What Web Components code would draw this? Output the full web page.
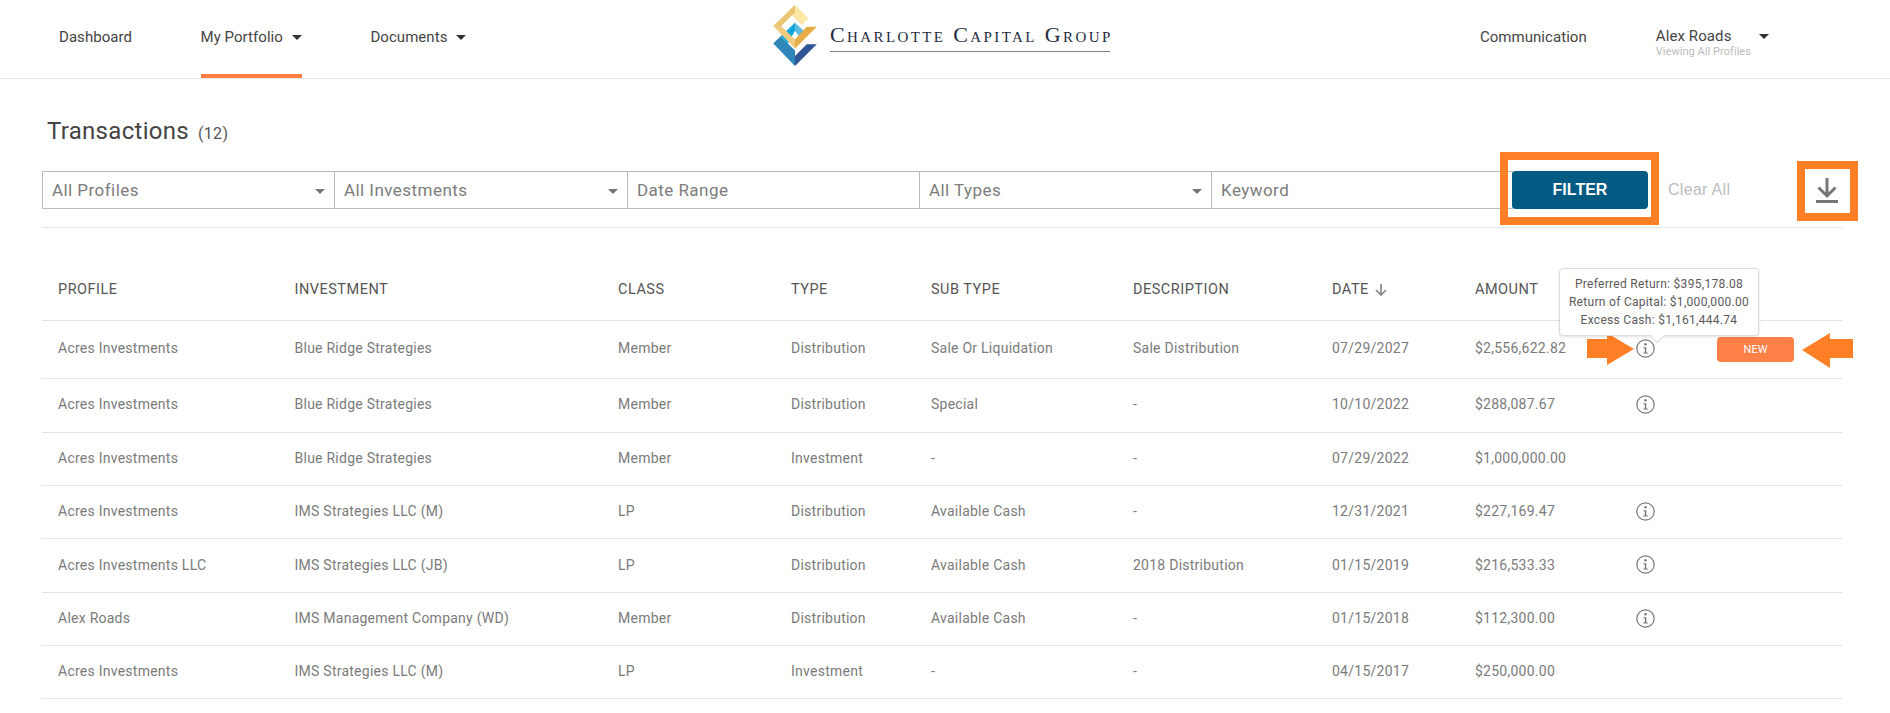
<!DOCTYPE html>
<html lang="en">
<head>
<meta charset="utf-8">
<title>Transactions</title>
<style>
    html, body { margin: 0; background: #fff; }
    body { font-family: Roboto, "Liberation Sans", sans-serif; color: #444; }
</style>
</head>
<body>

<app-header>
    <nav-link slot="left">Dashboard</nav-link>
    <nav-link slot="left" caret active>My Portfolio</nav-link>
    <nav-link slot="left" caret>Documents</nav-link>
    <nav-link slot="right">Communication</nav-link>
    <user-menu slot="right" name="Alex Roads" sub="Viewing All Profiles"></user-menu>
</app-header>

<page-title count="12">Transactions</page-title>

<filter-bar>
    <filter-field select w="293">All Profiles</filter-field>
    <filter-field select w="294">All Investments</filter-field>
    <filter-field w="293">Date Range</filter-field>
    <filter-field select w="293">All Types</filter-field>
    <filter-field w="302">Keyword</filter-field>
</filter-bar>

<tx-table>
    <tx-row head style="--h:93px">
        <span>PROFILE</span><span>INVESTMENT</span><span>CLASS</span><span>TYPE</span><span>SUB TYPE</span><span>DESCRIPTION</span><span>DATE <sort-arrow></sort-arrow></span><span>AMOUNT</span><span></span><span></span>
    </tx-row>
    <tx-row style="--h:58px; --pb:4px">
        <span>Acres Investments</span><span>Blue Ridge Strategies</span><span>Member</span><span>Distribution</span><span>Sale Or Liquidation</span><span>Sale Distribution</span><span>07/29/2027</span><span>$2,556,622.82</span>
        <info-tip open>
            <div>Preferred Return: $395,178.08</div>
            <div>Return of Capital: $1,000,000.00</div>
            <div>Excess Cash: $1,161,444.74</div>
        </info-tip>
        <new-badge>NEW</new-badge>
    </tx-row>
    <tx-row style="--h:54px; --pb:3px">
        <span>Acres Investments</span><span>Blue Ridge Strategies</span><span>Member</span><span>Distribution</span><span>Special</span><span>-</span><span>10/10/2022</span><span>$288,087.67</span><info-tip></info-tip><span></span>
    </tx-row>
    <tx-row style="--h:53px">
        <span>Acres Investments</span><span>Blue Ridge Strategies</span><span>Member</span><span>Investment</span><span>-</span><span>-</span><span>07/29/2022</span><span>$1,000,000.00</span><span></span><span></span>
    </tx-row>
    <tx-row style="--h:53px">
        <span>Acres Investments</span><span>IMS Strategies LLC (M)</span><span>LP</span><span>Distribution</span><span>Available Cash</span><span>-</span><span>12/31/2021</span><span>$227,169.47</span><info-tip></info-tip><span></span>
    </tx-row>
    <tx-row style="--h:54px">
        <span>Acres Investments LLC</span><span>IMS Strategies LLC (JB)</span><span>LP</span><span>Distribution</span><span>Available Cash</span><span>2018 Distribution</span><span>01/15/2019</span><span>$216,533.33</span><info-tip></info-tip><span></span>
    </tx-row>
    <tx-row style="--h:53px">
        <span>Alex Roads</span><span>IMS Management Company (WD)</span><span>Member</span><span>Distribution</span><span>Available Cash</span><span>-</span><span>01/15/2018</span><span>$112,300.00</span><info-tip></info-tip><span></span>
    </tx-row>
    <tx-row style="--h:53px">
        <span>Acres Investments</span><span>IMS Strategies LLC (M)</span><span>LP</span><span>Investment</span><span>-</span><span>-</span><span>04/15/2017</span><span>$250,000.00</span><span></span><span></span>
    </tx-row>
</tx-table>

<script>
class AppHeader extends HTMLElement {
    constructor() {
        super();
        this.attachShadow({ mode: 'open' });
        this.shadowRoot.innerHTML = `
            <style>
                :host {
                    display: flex;
                    align-items: stretch;
                    height: 78px;
                    padding: 0 121px 0 59px;
                    border-bottom: 1px solid #e6e6e6;
                }
                .left { display: flex; align-items: stretch; gap: 68.5px; }
                .right { display: flex; align-items: stretch; gap: 69px; margin-left: auto; }
                brand-logo { margin-left: 306.5px; }
            </style>
            <div class="left"><slot name="left"></slot></div>
            <brand-logo></brand-logo>
            <div class="right"><slot name="right"></slot></div>
        `;
    }
}

class NavLink extends HTMLElement {
    constructor() {
        super();
        this.attachShadow({ mode: 'open' });
        this.shadowRoot.innerHTML = `
            <style>
                :host {
                    display: flex;
                    align-items: center;
                    gap: 9px;
                    font-size: 15px;
                    letter-spacing: .05px;
                    color: #444;
                    padding-bottom: 4px;
                    box-sizing: border-box;
                }
                :host([active]) {
                    padding-bottom: 0;
                    border-bottom: 4px solid #fd7e41;
                }
                i {
                    display: none;
                    border-top: 5px solid #333;
                    border-left: 5px solid transparent;
                    border-right: 5px solid transparent;
                }
                :host([caret]) i { display: block; }
            </style>
            <slot></slot><i></i>
        `;
    }
}

class UserMenu extends HTMLElement {
    constructor() {
        super();
        this.attachShadow({ mode: 'open' });
        this.shadowRoot.innerHTML = `
            <style>
                :host { display: flex; align-items: flex-start; padding-top: 27px; gap: 8px; }
                .name { font-size: 15px; line-height: 18px; letter-spacing: .1px; color: #444; }
                .sub { font-size: 11px; line-height: 13px; letter-spacing: .05px; color: #bbb; }
                i {
                    margin-top: 7px;
                    border-top: 5px solid #333;
                    border-left: 5px solid transparent;
                    border-right: 5px solid transparent;
                }
            </style>
            <div>
                <div class="name">${this.getAttribute('name')}</div>
                <div class="sub">${this.getAttribute('sub')}</div>
            </div>
            <i></i>
        `;
    }
}

class BrandLogo extends HTMLElement {
    constructor() {
        super();
        this.attachShadow({ mode: 'open' });
        this.shadowRoot.innerHTML = `
            <style>
                :host { display: flex; align-items: flex-start; width: 337px; }
                svg { display: block; width: 44px; height: 61px; margin-top: 5px; }
                .word {
                    margin: 20px 0 0 13px;
                    width: 280px;
                    height: 31px;
                    border-bottom: 1px solid #7d8894;
                    font: 22px/30px "Liberation Serif", serif;
                    font-variant: small-caps;
                    letter-spacing: 2.4px;
                    color: #1f2b40;
                    white-space: nowrap;
                }
            </style>
            <svg viewBox="40 15 130 182">
                <path fill="#2e86b9" d="M40 130 62 108 105 151V197Z"/>
                <path fill="#2f5597" d="M105 197 170 132H140L105 167Z"/>
                <path fill="#12a5dd" d="M105 68 62 108 84 130 105 92Z"/>
                <path fill="#5cb9e0" d="M105 68 140 100 118 110 105 92Z"/>
                <path fill="#fbe8a6" d="M105 15 145 55 125 75 85 35Z"/>
                <path fill="#e9c672" d="M105 15 40 78H64L105 37Z"/>
                <path fill="#eecb80" d="M40 78 105 145V118L64 78Z"/>
                <path fill="#e7ae45" d="M105 145 170 80H140L105 118Z"/>
            </svg>
            <div class="word">Charlotte Capital Group</div>
        `;
    }
}

class PageTitle extends HTMLElement {
    constructor() {
        super();
        this.attachShadow({ mode: 'open' });
        this.shadowRoot.innerHTML = `
            <style>
                :host {
                    display: flex;
                    align-items: baseline;
                    gap: 9px;
                    height: 92px;
                    box-sizing: border-box;
                    padding: 36px 0 0 47px;
                    font-size: 24px;
                    line-height: 32px;
                    letter-spacing: .3px;
                    color: #444;
                }
                span { font-size: 16px; color: #555; }
            </style>
            <slot></slot><span>(${this.getAttribute('count')})</span>
        `;
    }
}

class FilterField extends HTMLElement {
    constructor() {
        super();
        this.attachShadow({ mode: 'open' });
        this.shadowRoot.innerHTML = `
            <style>
                :host {
                    display: flex;
                    align-items: center;
                    box-sizing: border-box;
                    height: 38px;
                    margin-right: -1px;
                    padding: 0 9px;
                    border: 1px solid #bbb;
                    font-size: 17px;
                    letter-spacing: .45px;
                    color: #7c7c7c;
                    background: #fff;
                }
                i {
                    display: none;
                    margin-left: auto;
                    margin-top: 2px;
                    border-top: 5px solid #777;
                    border-left: 5px solid transparent;
                    border-right: 5px solid transparent;
                }
                :host([select]) i { display: block; }
            </style>
            <slot></slot><i></i>
        `;
        this.style.width = this.getAttribute('w') + 'px';
    }
}

class FilterBar extends HTMLElement {
    constructor() {
        super();
        this.attachShadow({ mode: 'open' });
        this.shadowRoot.innerHTML = `
            <style>
                :host {
                    display: flex;
                    align-items: flex-start;
                    margin: 0 48px 0 42px;
                    height: 56px;
                    border-bottom: 1px solid #e6e6e6;
                    position: relative;
                }
                .fields { display: flex; }
                .btn-wrap { position: relative; }
                button {
                    display: block;
                    width: 136px;
                    height: 38px;
                    border: 0;
                    border-radius: 4px;
                    background: #005a82;
                    color: #fff;
                    font: 700 16px "Liberation Sans", sans-serif;
                }
                .clear {
                    margin: 9px 0 0 20px;
                    font: 16px/20px "Liberation Sans", sans-serif;
                    letter-spacing: .3px;
                    color: #bdbdbd;
                }
                .dl { position: relative; margin: 7px 0 0 86px; width: 22px; height: 25px; }
                .dl svg { display: block; }
                .mark { position: absolute; border: 8px solid #ff7f27; }
                .mark.a { left: -12px; right: -11px; top: -19px; bottom: -16px; }
                .mark.b { left: -19px; right: -20px; top: -17px; bottom: -18px; }
            </style>
            <div class="fields"><slot></slot></div>
            <div class="btn-wrap">
                <button>FILTER</button>
                <div class="mark a"></div>
            </div>
            <div class="clear">Clear All</div>
            <div class="dl">
                <svg width="22" height="25" viewBox="0 0 22 25">
                    <path d="M11 0V18M2.500 9.500 11 18l8.500-8.500" fill="none" stroke="#777" stroke-width="3"/>
                    <rect y="22" width="22" height="3" fill="#777"/>
                </svg>
                <div class="mark b"></div>
            </div>
        `;
    }
}

class TxTable extends HTMLElement {
    constructor() {
        super();
        this.attachShadow({ mode: 'open' });
        this.shadowRoot.innerHTML = `
            <style>
                :host { display: block; margin: 0 48px 0 42px; }
            </style>
            <slot></slot>
        `;
    }
}

class TxRow extends HTMLElement {
    constructor() {
        super();
        this.attachShadow({ mode: 'open' });
        this.shadowRoot.innerHTML = `
            <style>
                :host {
                    display: grid;
                    grid-template-columns: 236.5px 323.5px 173px 140px 202px 199px 143px 161px 81px 1fr;
                    align-items: center;
                    box-sizing: border-box;
                    height: var(--h);
                    padding: 0 0 var(--pb, 2px) 16px;
                    border-bottom: 1px solid #e3e3e3;
                    font-size: 14px;
                    letter-spacing: .25px;
                    color: #7b7b7b;
                    white-space: nowrap;
                }
                :host([head]) {
                    color: #555;
                    font-size: 14.500px;
                    letter-spacing: .5px;
                    align-items: end;
                    padding-bottom: 22px;
                }
            </style>
            <slot></slot>
        `;
    }
}

class SortArrow extends HTMLElement {
    constructor() {
        super();
        this.attachShadow({ mode: 'open' });
        this.shadowRoot.innerHTML = `
            <style>
                :host { display: inline-block; vertical-align: -2px; margin-left: 2px; }
                svg { display: block; }
            </style>
            <svg width="12" height="12" viewBox="0 0 12 12">
                <path d="M6 0V11M1 6 6 11l5-5" fill="none" stroke="#888" stroke-width="1.700"/>
            </svg>
        `;
    }
}

class InfoTip extends HTMLElement {
    constructor() {
        super();
        this.attachShadow({ mode: 'open' });
        this.shadowRoot.innerHTML = `
            <style>
                :host { display: block; position: relative; width: 19px; height: 19px; }
                :host([open]) { margin-top: 2px; }
                svg { display: block; }
                .tip {
                    display: none;
                    position: absolute;
                    left: -77px;
                    top: -71px;
                    width: 200px;
                    box-sizing: border-box;
                    padding: 6px 0;
                    background: #fff;
                    border: 1px solid #ddd;
                    border-radius: 4px;
                    box-shadow: 0 1px 3px rgba(0,0,0,.12);
                    font-size: 12px;
                    line-height: 18px;
                    letter-spacing: .3px;
                    color: #5a5a5a;
                    text-align: center;
                    z-index: 2;
                }
                .tip::after {
                    content: '';
                    position: absolute;
                    left: 92px;
                    bottom: -6px;
                    width: 10px;
                    height: 10px;
                    background: #fff;
                    border-right: 1px solid #ddd;
                    border-bottom: 1px solid #ddd;
                    transform: rotate(45deg);
                }
                :host([open]) .tip { display: block; }
                .arrow { display: none; position: absolute; left: -49px; top: -6px; }
                :host([open]) .arrow { display: block; }
            </style>
            <svg width="19" height="19" viewBox="0 0 19 19">
                <circle cx="9.500" cy="9.500" r="8.700" fill="none" stroke="#777" stroke-width="1.200"/>
                <circle cx="9.500" cy="5.300" r="1.200" fill="#777"/>
                <path d="M7.500 8.300H10.300V13.600H11.800V14.600H7.300V13.600H8.800V9.300H7.500Z" fill="#777"/>
            </svg>
            <div class="tip"><slot></slot></div>
            <svg class="arrow" width="47" height="32" viewBox="0 0 47 32">
                <path d="M0 6H20V0L47 16 20 32V25H0Z" fill="#ff7f27"/>
            </svg>
        `;
    }
}

class NewBadge extends HTMLElement {
    constructor() {
        super();
        this.attachShadow({ mode: 'open' });
        this.shadowRoot.innerHTML = `
            <style>
                :host {
                    display: flex;
                    align-items: center;
                    justify-content: center;
                    position: relative;
                    width: 77px;
                    height: 25px;
                    margin-top: 4px;
                    border-radius: 4px;
                    background: #fd8047;
                    color: #fff;
                    font-size: 11px;
                    letter-spacing: 0;
                }
                svg { position: absolute; left: 85px; top: -4px; }
            </style>
            <slot></slot>
            <svg width="51" height="35" viewBox="0 0 51 35">
                <path d="M51 6H28V0L0 17 28 35V25H51Z" fill="#ff7f27"/>
            </svg>
        `;
    }
}

customElements.define('nav-link', NavLink);
customElements.define('user-menu', UserMenu);
customElements.define('brand-logo', BrandLogo);
customElements.define('app-header', AppHeader);
customElements.define('page-title', PageTitle);
customElements.define('filter-field', FilterField);
customElements.define('filter-bar', FilterBar);
customElements.define('tx-table', TxTable);
customElements.define('tx-row', TxRow);
customElements.define('sort-arrow', SortArrow);
customElements.define('info-tip', InfoTip);
customElements.define('new-badge', NewBadge);
</script>
</body>
</html>
